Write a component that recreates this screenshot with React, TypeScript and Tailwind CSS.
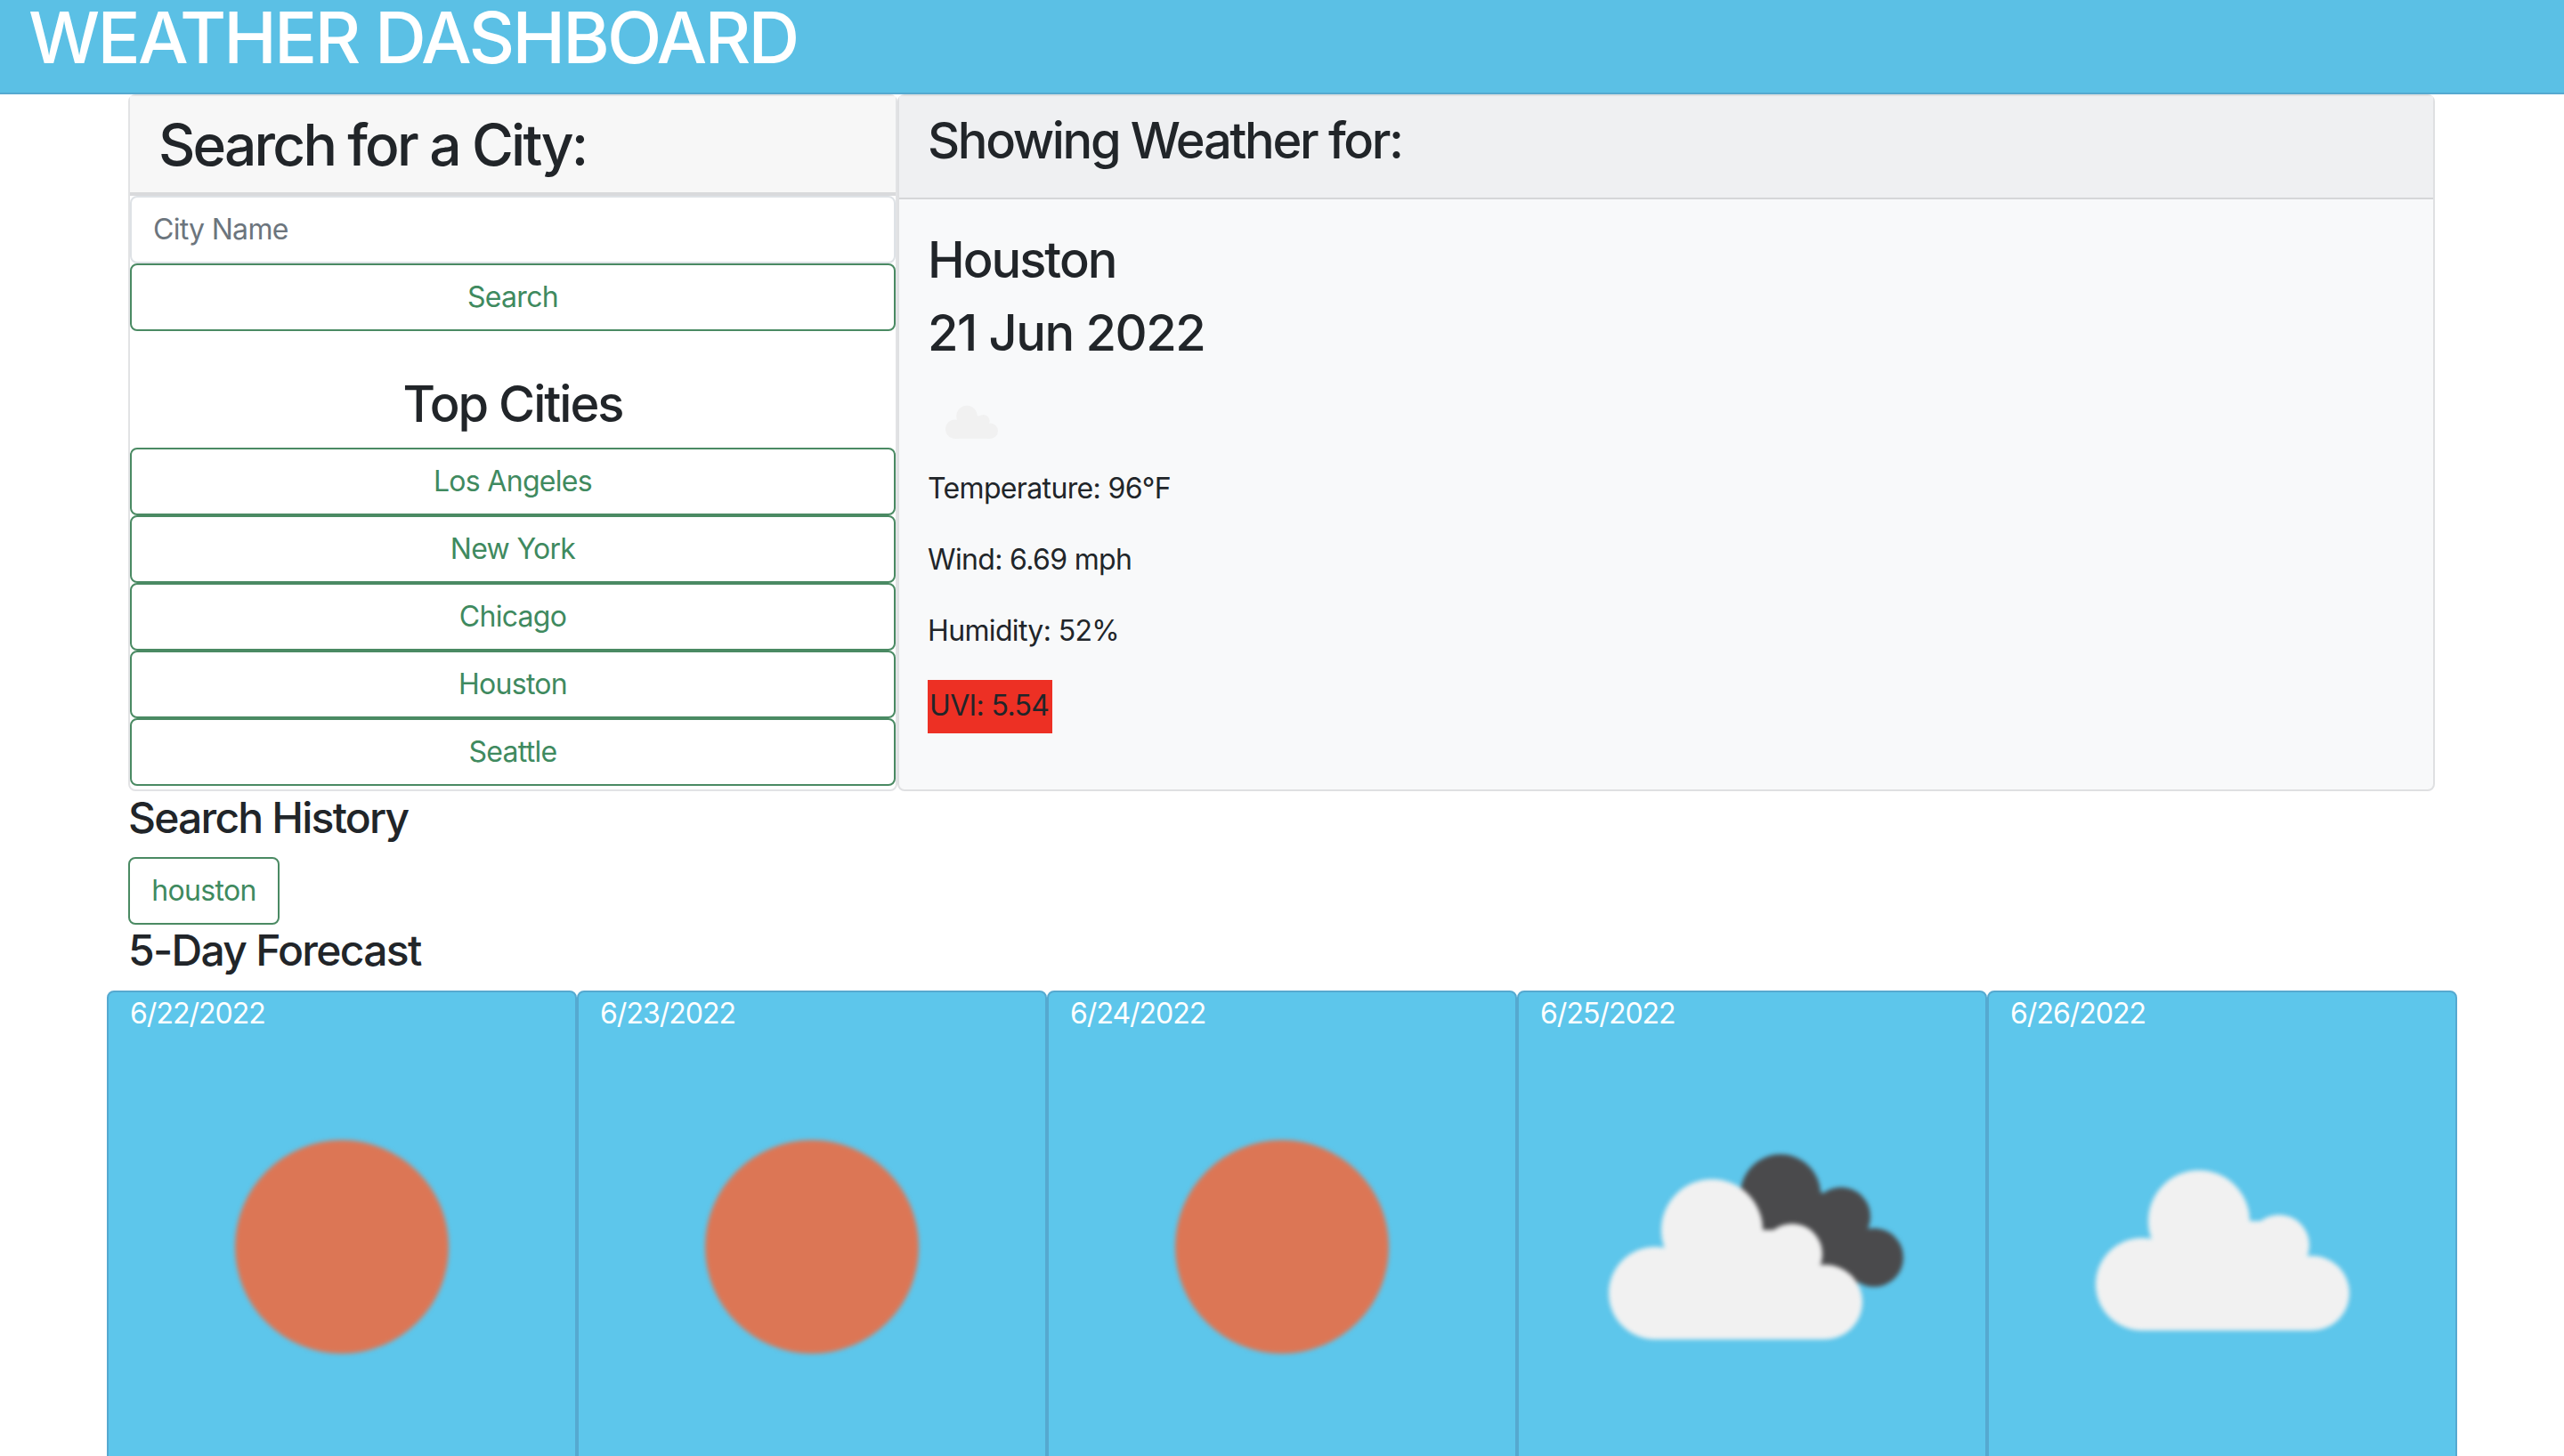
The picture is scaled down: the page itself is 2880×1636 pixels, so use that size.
const cityBtn =
  "block h-[76px] w-full rounded-lg border-2 border-[#4a8a63] bg-white text-center text-[32px] leading-[72px] tracking-[-0.7px] text-[#3f8a5f]";

function Cloud() {
  return (
    <g>
      <circle cx="172" cy="280" r="52" />
      <circle cx="236" cy="209" r="57" />
      <circle cx="326" cy="236" r="34" />
      <circle cx="363" cy="290" r="42" />
      <rect x="172" y="285" width="191" height="47" />
      <rect x="200" y="250" width="140" height="50" />
      <rect x="236" y="209" width="90" height="90" />
    </g>
  );
}

function WeatherIcon({ kind }: { kind: "sun" | "mixed" | "cloud" }) {
  return (
    <svg viewBox="0 0 524 524" className="block h-[524px] w-[524px] blur-[2.5px]">
      {kind === "sun" && <circle cx="262" cy="238" r="120" fill="#dc7655" />}
      {kind === "mixed" && (
        <>
          <g fill="#4a4a4c">
            <circle cx="294" cy="179" r="45" />
            <circle cx="362" cy="204" r="33" />
            <circle cx="399" cy="250" r="33" />
            <polygon points="294,150 362,190 399,250 380,280 290,250" />
          </g>
          <g fill="#f1f1f1" transform="translate(-19 10)">
            <Cloud />
          </g>
        </>
      )}
      {kind === "cloud" && (
        <g fill="#f1f1f1">
          <Cloud />
        </g>
      )}
    </svg>
  );
}

const days: { date: string; kind: "sun" | "mixed" | "cloud" }[] = [
  { date: "6/22/2022", kind: "sun" },
  { date: "6/23/2022", kind: "sun" },
  { date: "6/24/2022", kind: "sun" },
  { date: "6/25/2022", kind: "mixed" },
  { date: "6/26/2022", kind: "cloud" },
];

export default function App() {
  return (
    <div className="h-[1636px] w-[2880px] overflow-hidden bg-white font-[Inter,sans-serif] text-[#212529]">
      <header className="h-[106px] border-b-2 border-[#55a9d0] bg-[#5bc0e5] pl-[32px]">
        <h1 className="text-[80px] leading-[84px] font-medium tracking-[-2.8px] whitespace-nowrap text-white">
          WEATHER DASHBOARD
        </h1>
      </header>

      <div className="ml-[144px] flex h-[783px] w-[2591px]">
        <section className="flex w-[864px] flex-col rounded-lg border-2 border-[#e2e3e5] bg-white">
          <div className="h-[112px] shrink-0 border-b-4 border-[#d9dadc] bg-[#f7f7f7] px-[32px] pt-[16px]">
            <h2 className="text-[64px] leading-[77px] font-medium tracking-[-2.8px]">Search for a City:</h2>
          </div>
          <div className="h-[76px] rounded-lg border-2 border-[#dee2e6] px-[24px] text-[32px] leading-[72px] tracking-[-0.7px] text-[#6c757d]">
            City Name
          </div>
          <div className={cityBtn}>Search</div>
          <h3 className="mt-[49px] mb-[15px] text-center text-[56px] leading-[67px] font-medium tracking-[-2px]">
            Top Cities
          </h3>
          {["Los Angeles", "New York", "Chicago", "Houston", "Seattle"].map((c) => (
            <div key={c} className={cityBtn}>
              {c}
            </div>
          ))}
        </section>

        <section className="flex flex-1 flex-col rounded-lg border-2 border-[#dfe0e2] bg-[#f8f9fa]">
          <div className="h-[116px] shrink-0 border-b-2 border-[#d5d6d8] bg-[#eff0f2] px-[32px] pt-[17px]">
            <h3 className="text-[56px] leading-[67px] font-medium tracking-[-2.35px]">Showing Weather for:</h3>
          </div>
          <div className="px-[32px] pt-[35px]">
            <h3 className="mb-[15px] text-[56px] leading-[67px] font-medium tracking-[-2px]">Houston</h3>
            <h3 className="text-[56px] leading-[67px] font-medium tracking-[-1.4px]">21 Jun 2022</h3>
            <svg viewBox="120 150 290 186" className="mt-[47px] ml-[20px] block h-[39px] w-[60px] blur-[0.5px]">
              <g fill="#f1f1f1">
                <Cloud />
              </g>
            </svg>
            <p className="mt-[31px] mb-[32px] text-[32px] leading-[48px] tracking-[-0.65px]">Temperature: 96°F</p>
            <p className="mb-[32px] text-[32px] leading-[48px] tracking-[-0.65px]">Wind: 6.69 mph</p>
            <p className="mb-[31px] text-[32px] leading-[48px] tracking-[-0.65px]">Humidity: 52%</p>
            <span className="block h-[60px] w-[140px] bg-[#ed3024] pl-[2px] text-[32px] leading-[58px] tracking-[-0.65px] whitespace-nowrap">
              UVI: 5.54
            </span>
          </div>
        </section>
      </div>

      <div className="ml-[144px]">
        <h4 className="pt-[1px] text-[48px] leading-[57px] font-medium tracking-[-1.8px]">Search History</h4>
        <div className="mt-[16px] h-[76px] w-[170px] rounded-lg border-2 border-[#4a8a63] text-center text-[32px] leading-[72px] tracking-[-0.7px] text-[#3f8a5f]">
          houston
        </div>
        <h4 className="mb-[16px] text-[48px] leading-[58px] font-medium tracking-[-1.7px]">5-Day Forecast</h4>
      </div>

      <div className="ml-[120px] grid w-[2640px] grid-cols-5">
        {days.map((d) => (
          <div key={d.date} className="h-[560px] rounded-lg border-2 border-[#55a9d0] bg-[#5dc6eb]">
            <p className="pl-[24px] text-[32px] leading-[48px] tracking-[-1px] text-white">{d.date}</p>
            <WeatherIcon kind={d.kind} />
          </div>
        ))}
      </div>
    </div>
  );
}
